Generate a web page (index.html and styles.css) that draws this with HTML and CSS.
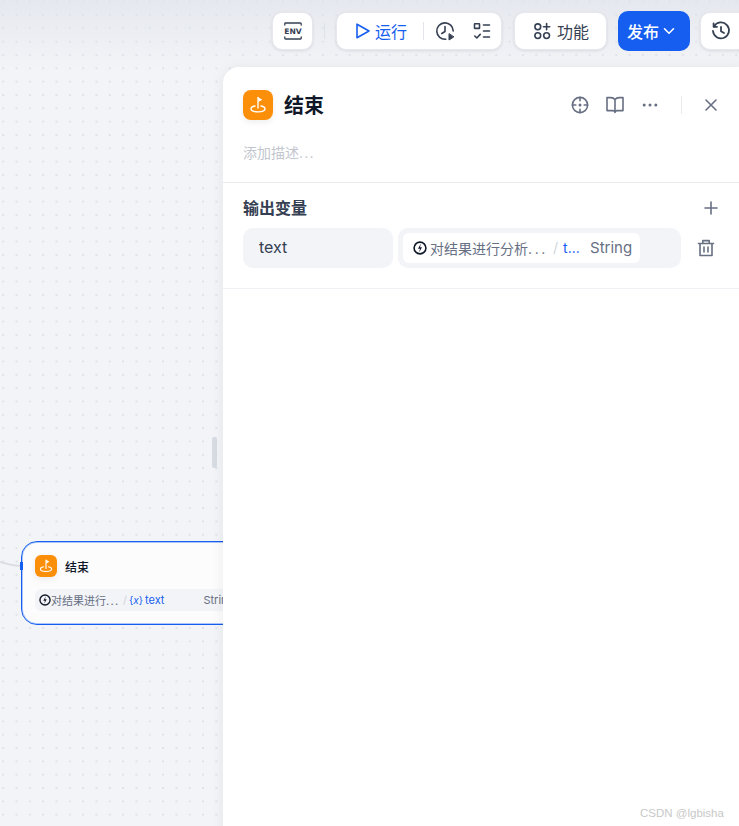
FILE: index.html
```html
<!DOCTYPE html>
<html lang="zh">
<head>
<meta charset="utf-8">
<title>结束</title>
<link rel="stylesheet" href="styles.css">
</head>
<body>
<div class="canvas">
  <svg class="edge" width="24" height="12" viewBox="0 0 24 12"><path d="M0 2C8 4 12 6 22 6" fill="none" stroke="#d9dce3" stroke-width="2"/></svg>

  <div class="node">
    <span class="handle"></span>
    <div class="node-head">
      <span class="flag-icon small">
        <svg width="16" height="16" viewBox="0 0 16 16"><use href="#flag"/></svg>
      </span>
      <span class="node-title">结束</span>
    </div>
    <div class="node-row">
      <svg class="src" width="12" height="12" viewBox="0 0 14 14"><use href="#src"/></svg>
      <span class="node-src">对结果进行<span class="dots">...</span></span>
      <span class="node-slash">/</span>
      <span class="node-var">{<i>x</i>}</span>
      <span class="node-var name">text</span>
      <span class="node-type">String</span>
    </div>
  </div>

  <span class="drag"></span>

  <div class="toolbar">
    <button class="tb env" aria-label="ENV">
      <svg width="20" height="20" viewBox="0 0 20 20" fill="none" stroke="#354052" stroke-width="1.3" stroke-linecap="round" stroke-linejoin="round">
        <path d="M1.8 4V2.8a.8.8 0 0 1 .8-.8h14.8a.8.8 0 0 1 .8.8V4M1.8 16v1.2a.8.8 0 0 0 .8.8h14.8a.8.8 0 0 0 .8-.8V16"/>
        <text x="10" y="13.2" class="env-text" text-anchor="middle">ENV</text>
      </svg>
    </button>
    <span class="tb-sep"></span>
    <div class="tb run-group">
      <span class="run">
        <svg width="16" height="18" viewBox="0 0 16 18" fill="none" stroke="#155eef" stroke-width="1.6" stroke-linejoin="round"><path d="M2 2.2v13.6L14 9z"/></svg>
        运行
      </span>
      <span class="run-sep"></span>
      <svg class="hist" width="20" height="20" viewBox="0 0 20 20" fill="none" stroke="#354052" stroke-width="1.6" stroke-linecap="round" stroke-linejoin="round">
        <path d="M10.8 18.2A8.2 8.2 0 1 1 18.2 10"/><path d="M10 5.5V10.5L6.8 12.5"/>
        <path d="M14 13v6l4.6-3z" fill="#354052" stroke-width="1"/>
      </svg>
      <svg class="check" width="18" height="18" viewBox="0 0 18 18" fill="none" stroke="#354052" stroke-width="1.6" stroke-linecap="round" stroke-linejoin="round">
        <rect x="1.5" y="1.8" width="5" height="4.6" rx=".4"/><path d="M10.5 3h6M10.5 9h6M10.5 15h6M1.8 14l2 2 3.4-3.6"/>
      </svg>
    </div>
    <button class="tb feature">
      <svg width="18" height="18" viewBox="0 0 18 18" fill="none" stroke="#354052" stroke-width="1.6" stroke-linecap="round">
        <circle cx="4.8" cy="4.8" r="2.9"/><circle cx="4.8" cy="13.6" r="2.9"/><circle cx="13.6" cy="13.6" r="2.9"/><path d="M13.6 1.6v6.2M10.5 4.7h6.2"/>
      </svg>
      功能
    </button>
    <button class="publish">发布
      <svg width="12" height="12" viewBox="0 0 12 12" fill="none" stroke="#fff" stroke-width="1.6" stroke-linecap="round" stroke-linejoin="round"><path d="M1.5 3.8 6 8.2l4.5-4.4"/></svg>
    </button>
    <button class="tb history" aria-label="历史">
      <svg width="20" height="20" viewBox="0 0 20 20" fill="none" stroke="#354052" stroke-width="1.8" stroke-linecap="round" stroke-linejoin="round">
        <path d="M3 5.5A8 8 0 1 1 2 10"/><path d="M2.6 2.4v3.4h3.4"/><path d="M10 6v4.3l3 1.8"/>
      </svg>
    </button>
  </div>

  <aside class="panel">
    <header class="panel-head">
      <span class="flag-icon">
        <svg width="20" height="20" viewBox="0 0 16 16"><use href="#flag"/></svg>
      </span>
      <h1 class="panel-title">结束</h1>
      <div class="head-tools">
        <svg width="20" height="20" viewBox="0 0 20 20" fill="none" stroke="#676f83" stroke-width="1.6" stroke-linecap="round"><circle cx="10" cy="10" r="7.6"/><path d="M10 2.4v3.4M10 14.2v3.4M2.4 10h3.4M14.2 10h3.4"/><circle cx="10" cy="10" r=".7" fill="#676f83"/></svg>
        <svg width="20" height="20" viewBox="0 0 20 20" fill="none" stroke="#676f83" stroke-width="1.6" stroke-linejoin="round"><path d="M10 4.5C9 3.2 7.6 2.6 5.8 2.6H2v13h5.8c1.2 0 2.2.6 2.2 1.8 0-1.2 1-1.8 2.2-1.8H18v-13h-3.8c-1.8 0-3.2.6-4.2 1.9zM10 4.5v12.9"/></svg>
        <svg width="20" height="20" viewBox="0 0 20 20" fill="#676f83"><circle cx="4.2" cy="10" r="1.5"/><circle cx="10" cy="10" r="1.5"/><circle cx="15.8" cy="10" r="1.5"/></svg>
        <span class="head-sep"></span>
        <svg class="close" width="12" height="12" viewBox="0 0 12 12" fill="none" stroke="#676f83" stroke-width="1.6" stroke-linecap="round"><path d="M1 1l10 10M11 1 1 11"/></svg>
      </div>
    </header>
    <p class="panel-desc">添加描述<span class="dots-light">...</span></p>
    <section class="output">
      <div class="output-head">
        <h2 class="output-title">输出变量</h2>
        <svg width="14" height="14" viewBox="0 0 14 14" fill="none" stroke="#676f83" stroke-width="1.6" stroke-linecap="round"><path d="M7 1v12M1 7h12"/></svg>
      </div>
      <div class="var-row">
        <div class="var-name">text</div>
        <div class="var-value">
          <div class="chip">
            <svg class="src" width="14" height="14" viewBox="0 0 14 14"><use href="#src"/></svg>
            <span class="chip-src">对结果进行分析<span class="dots-wide">...</span></span>
            <span class="chip-slash">/</span>
            <span class="chip-var">t...</span>
            <span class="chip-type">String</span>
          </div>
        </div>
        <svg class="trash" width="18" height="18" viewBox="0 0 18 18" fill="none" stroke="#676f83" stroke-width="1.6" stroke-linecap="round" stroke-linejoin="round"><path d="M1.5 4.5h15M5.8 4.5V1.6h6.4v2.9M3 4.5v12h12v-12M7 8v5M11 8v5"/></svg>
      </div>
    </section>
  </aside>

  <span class="watermark">CSDN @lgbisha</span>
</div>

<svg class="defs" width="0" height="0">
  <defs>
    <g id="flag">
      <path d="M8 2v8.4" fill="none" stroke="#fff" stroke-width="1.1" stroke-linecap="round"/>
      <path d="M8.2 1.8 11.4 3.7 8.2 5.6z" fill="#fff"/>
      <path d="M5.6 8.8C3.6 9.2 2.4 10 2.4 11c0 1.5 2.5 2.5 5.6 2.5s5.6-1 5.6-2.5c0-1-1.2-1.8-3.2-2.2" fill="none" stroke="#fff" stroke-width="1.1" stroke-linecap="round"/>
    </g>
    <g id="src">
      <circle cx="7" cy="7" r="5.9" fill="none" stroke="#101828" stroke-width="1.6"/>
      <path d="M7.9 2.6 5 7.8h2l-.9 3.6L9 6.2H7z" fill="#101828"/>
    </g>
  </defs>
</svg>
</body>
</html>
```
FILE: styles.css
```css
* { box-sizing: border-box; }
html, body { margin: 0; height: 100%; }
body {
  font-family: Inter, "Noto Sans CJK SC", sans-serif;
  overflow: hidden;
}
button { font: inherit; padding: 0; cursor: pointer; }
svg { display: block; flex: none; }
.defs { position: absolute; }

.canvas {
  position: relative;
  width: 739px;
  height: 826px;
  overflow: hidden;
  background-color: #f2f4f7;
  background-image:
    linear-gradient(180deg, rgba(224,227,235,.7) 0, rgba(242,244,247,0) 70px),
    radial-gradient(circle, #dfe2e8 0.9px, transparent 1.1px);
  background-size: 100% 100%, 13.33px 13.33px;
  background-position: 0 0, -3.5px -5px;
}

.edge { position: absolute; left: 0; top: 560px; }

/* node on the canvas */
.node {
  position: absolute;
  left: 21px;
  top: 541px;
  width: 240px;
  height: 84px;
  background: #fcfcfd;
  border: 1px solid #155eef;
  border-radius: 16px;
  box-shadow: inset 0 0 0 1px rgba(21,94,239,.35);
  padding: 13px 13px 0;
}
.handle {
  position: absolute;
  left: -2px;
  top: 20px;
  width: 3px;
  height: 8px;
  background: #155eef;
}
.node-head { display: flex; align-items: center; gap: 8px; }
.flag-icon {
  display: flex;
  align-items: center;
  justify-content: center;
  width: 30px;
  height: 30px;
  border-radius: 8px;
  background: #fb8f09;
  box-shadow: 0 2px 6px rgba(16,24,40,.08);
  flex: none;
}
.flag-icon.small { width: 22px; height: 22px; border-radius: 6px; }
.node-title { font-size: 12px; font-weight: 500; color: #101828; }
.node-row {
  display: flex;
  align-items: center;
  height: 22px;
  margin-top: 12px;
  padding: 0 4px;
  background: #f2f4f7;
  border-radius: 6px;
  font-size: 11px;
  color: #676f83;
  white-space: nowrap;
}
.node-src { width: 67px; }
.dots { letter-spacing: 1.3px; }
.dots-wide { letter-spacing: 2.6px; }
.dots-light { letter-spacing: 1.2px; }
.node-slash { color: #d0d5dc; margin: 0 2px 0 5px; }
.node-var { color: #155eef; font-size: 10px; }
.node-var i { font-style: italic; }
.node-var.name { font-size: 11px; margin-left: 2px; }
.node-type { margin-left: 39px; }

.drag {
  position: absolute;
  left: 212px;
  top: 437px;
  width: 5px;
  height: 31px;
  border-radius: 2px;
  background: #d7dbe2;
}

/* toolbar */
.toolbar {
  position: absolute;
  top: 11px;
  left: 272px;
  display: flex;
  align-items: center;
  height: 40px;
  white-space: nowrap;
}
.tb {
  display: flex;
  align-items: center;
  height: 38px;
  background: #fff;
  border: 1px solid #e6e8ed;
  border-radius: 10px;
  box-shadow: 0 1px 3px rgba(16,24,40,.1);
  color: #354052;
  font-size: 16px;
}
.env { width: 41px; justify-content: center; }
.env-text {
  font: 800 7.6px "DejaVu Sans", sans-serif;
  fill: #354052;
  stroke: none;
}
.tb-sep { width: 1px; height: 16px; background: #dfe2e8; margin: 0 11px 0 11px; }
.run-group { width: 166px; padding-left: 18px; }
.run { display: flex; align-items: center; gap: 4px; color: #155eef; font-size: 16px; }
.run-sep { width: 1px; height: 18px; background: #e3e5ea; margin: 0 11px 0 16px; }
.check { margin-left: 18px; }
.feature { width: 93px; margin-left: 12px; padding-left: 18px; gap: 6px; }
.publish {
  display: flex;
  align-items: center;
  gap: 4px;
  width: 72px;
  height: 40px;
  margin-left: 11px;
  padding-left: 9px;
  border: 0;
  border-radius: 10px;
  background: #155eef;
  color: #fff;
  font-size: 16px;
  font-weight: 500;
}
.history { width: 60px; margin-left: 10px; padding-left: 10px; }

/* panel */
.panel {
  position: absolute;
  left: 223px;
  top: 67px;
  width: 530px;
  height: 790px;
  background: #fff;
  border-radius: 16px;
  box-shadow: -2px 0 12px rgba(16,24,40,.05);
}
.panel-head {
  display: flex;
  align-items: center;
  height: 30px;
  margin: 23px 0 0 20px;
  width: 497px;
}
.panel-title {
  margin: 0 0 0 11px;
  padding-top: 1px;
  font-size: 20px;
  line-height: 30px;
  font-weight: 700;
  color: #101828;
}
.head-tools {
  display: flex;
  align-items: center;
  margin-left: auto;
  padding-right: 23px;
  gap: 15px;
}
.head-sep { width: 1px; height: 18px; background: #e8eaee; margin: 0 8px 0 6px; }
.panel-desc {
  margin: 0;
  padding: 23px 20px 0;
  height: 63px;
  font-size: 14px;
  line-height: 20px;
  color: #c2c6ce;
  border-bottom: 1px solid #e8eaee;
}
.output {
  height: 106px;
  border-bottom: 1px solid #f0f1f4;
  padding: 13px 20px 0;
  width: 516px;
}
.output-head {
  display: flex;
  align-items: center;
  justify-content: space-between;
  height: 24px;
  padding-right: 1px;
}
.output-title {
  margin: 0;
  font-size: 16px;
  line-height: 24px;
  font-weight: 600;
  color: #354052;
}
.var-row {
  display: flex;
  align-items: center;
  margin-top: 8px;
  height: 40px;
}
.var-name {
  width: 150px;
  height: 40px;
  padding-left: 16px;
  border-radius: 10px;
  background: #f2f4f7;
  font-size: 16px;
  line-height: 39px;
  color: #354052;
}
.var-value {
  display: flex;
  align-items: center;
  width: 283px;
  height: 40px;
  margin-left: 5px;
  padding-left: 5px;
  border-radius: 10px;
  background: #f2f4f7;
}
.chip {
  display: flex;
  align-items: center;
  height: 30px;
  width: 237px;
  padding: 0 0 1px 10px;
  border-radius: 6px;
  background: #fff;
  font-size: 14px;
  color: #676f83;
  white-space: nowrap;
}
.chip-src { margin-left: 3px; width: 117px; }
.chip-slash { color: #d0d5dc; margin-left: 6px; }
.chip-var { color: #155eef; margin-left: 5px; width: 19px; }
.chip-type { margin-left: 8px; font-size: 15px; }
.trash { margin-left: 16px; }

.watermark {
  position: absolute;
  left: 640px;
  top: 806px;
  font-family: "Liberation Sans", sans-serif;
  font-size: 11.5px;
  line-height: 14px;
  color: #c8c8c8;
}
```
